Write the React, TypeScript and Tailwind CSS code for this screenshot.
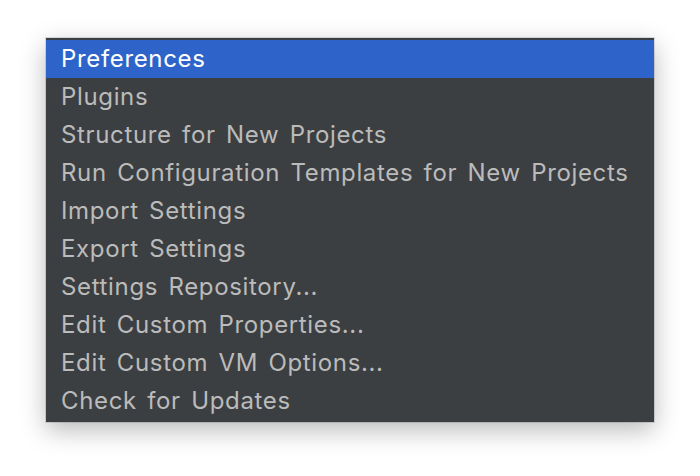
import React from "react";

const items = [
  "Preferences",
  "Plugins",
  "Structure for New Projects",
  "Run Configuration Templates for New Projects",
  "Import Settings",
  "Export Settings",
  "Settings Repository...",
  "Edit Custom Properties...",
  "Edit Custom VM Options...",
  "Check for Updates",
];

export default function App() {
  return (
    <div className="w-[700px] h-[476px] bg-white pt-[38px] pl-[46px]" style={{ fontFamily: "Inter, 'Noto Sans', sans-serif" }}>
      <div className="w-[608px] h-[384px] bg-[#3c3f41] py-[2px] shadow-[0_8px_24px_rgba(0,0,0,0.28),0_0_0_1px_rgba(0,0,0,0.12)]">
        {items.map((t, i) => (
          <div
            key={t}
            className={`h-[38px] flex items-center pl-[15px] text-[24px] tracking-[0.65px] [word-spacing:3px] whitespace-nowrap ${
              i === 0 ? "bg-[#2e64c9] text-white" : "text-[#bbbbbb]"
            }`}
          >
            {t}
          </div>
        ))}
      </div>
    </div>
  );
}
